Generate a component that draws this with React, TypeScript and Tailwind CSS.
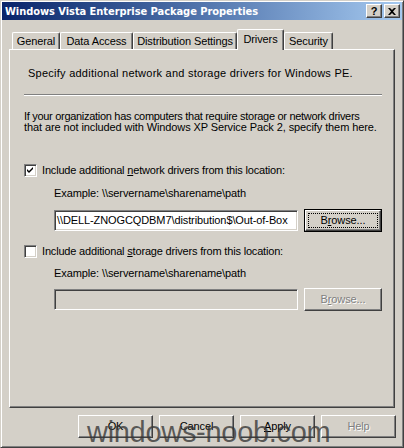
import React from "react";

const font = { fontFamily: '"Liberation Sans", Arial, sans-serif' };

function RaisedButton({
  children,
  className = "",
}: {
  children: React.ReactNode;
  className?: string;
}) {
  return (
    <div
      className={
        "flex items-center justify-center bg-[#d4d0c8] border border-t-white border-l-white border-r-[#404040] border-b-[#404040] shadow-[inset_-1px_-1px_0_#808080] " +
        className
      }
    >
      {children}
    </div>
  );
}

function Checkbox({ checked }: { checked: boolean }) {
  return (
    <div className="w-[13px] h-[13px] bg-white border border-t-[#808080] border-l-[#808080] border-r-white border-b-white shadow-[inset_1px_1px_0_#404040,inset_-1px_-1px_0_#d4d0c8] flex items-center justify-center shrink-0">
      {checked && (
        <svg width="7" height="7" viewBox="0 0 7 7">
          <path d="M0 2 L2 4 L6 0 L6 2 L2 6 L0 4 Z" fill="#000" />
        </svg>
      )}
    </div>
  );
}

function Tab({
  label,
  width,
  selected = false,
}: {
  label: string;
  width: number;
  selected?: boolean;
}) {
  if (selected) {
    return (
      <div
        className="relative z-10 -mb-px h-[21px] flex items-start justify-center pt-[3px] bg-[#d4d0c8] border-l border-t border-white border-r border-r-[#404040] rounded-tl-[2px] rounded-tr-[2px] shadow-[inset_-1px_0_0_#808080]"
        style={{ width }}
      >
        {label}
      </div>
    );
  }
  return (
    <div
      className="h-[17px] flex items-start justify-center pt-[2px] bg-[#d4d0c8] border-l border-t border-white border-r border-r-[#404040] rounded-tl-[2px] rounded-tr-[2px] shadow-[inset_-1px_0_0_#808080]"
      style={{ width }}
    >
      {label}
    </div>
  );
}

export default function App() {
  return (
    <div
      className="relative w-[404px] h-[448px] bg-[#d4d0c8] text-[11px] tracking-[-0.1px] text-black leading-[13px] border border-t-[#d4d0c8] border-l-[#d4d0c8] border-r-[#404040] border-b-[#404040] shadow-[inset_1px_1px_0_#fff,inset_-1px_-1px_0_#808080] p-px overflow-hidden"
      style={font}
    >
      {/* Title bar */}
      <div className="h-[18px] flex items-center justify-between pl-[3px] pr-[2px] bg-gradient-to-r from-[#0a246a] to-[#a6caf0]">
        <span
          className="text-white font-bold text-[11px] tracking-[-0.05px]"
          style={{ fontFamily: '"DejaVu Sans Condensed", "DejaVu Sans", sans-serif' }}
        >
          Windows Vista Enterprise Package Properties
        </span>
        <div className="flex gap-[2px]">
          <RaisedButton className="w-[16px] h-[14px] font-bold text-[11px] leading-none">
            ?
          </RaisedButton>
          <RaisedButton className="w-[16px] h-[14px]">
            <svg width="8" height="7" viewBox="0 0 8 7">
              <path d="M0 0 L2 0 L4 2 L6 0 L8 0 L5 3.5 L8 7 L6 7 L4 5 L2 7 L0 7 L3 3.5 Z" fill="#000" />
            </svg>
          </RaisedButton>
        </div>
      </div>

      {/* Tabs */}
      <div className="mt-[9px] ml-[10px] flex items-end h-[20px]">
        <Tab label="General" width={48} />
        <Tab label="Data Access" width={73} />
        <Tab label="Distribution Settings" width={104} />
        <Tab label="Drivers" width={47} selected />
        <Tab label="Security" width={49} />
      </div>

      {/* Panel */}
      <div className="ml-[7px] w-[386px] h-[359px] flex flex-col border border-t-white border-l-white border-r-[#404040] border-b-[#404040] shadow-[inset_-1px_-1px_0_#808080]">
        <div className="mt-[17px] ml-[18px] tracking-[0.25px]">
          Specify additional network and storage drivers for Windows PE.
        </div>
        <div className="mt-[14px] ml-[14px] w-[358px] h-[2px] border-t border-t-[#808080] border-b border-b-white" />
        <div className="mt-[15px] ml-[14px] leading-[11px]">
          <div className="tracking-[-0.3px]">
            If your organization has computers that require storage or network drivers
          </div>
          <div>that are not included with Windows XP Service Pack 2, specify them here.</div>
        </div>

        {/* Network */}
        <div className="mt-[31px] ml-[14px] flex items-center gap-[5px] h-[13px]">
          <Checkbox checked />
          <span className="tracking-[-0.18px]">
            Include additional <u>n</u>etwork drivers from this location:
          </span>
        </div>
        <div className="mt-[10px] ml-[44px]">Example: \\servername\sharename\path</div>
        <div className="mt-[9px] ml-[44px] flex items-center gap-[6px] h-[23px]">
          <div className="w-[244px] h-[21px] bg-white flex items-center pl-[2px] border border-t-[#808080] border-l-[#808080] border-r-white border-b-white shadow-[inset_1px_1px_0_#404040,inset_-1px_-1px_0_#d4d0c8] overflow-hidden whitespace-nowrap">
            \\DELL-ZNOGCQDBM7\distribution$\Out-of-Box
          </div>
          <div className="w-[78px] h-[23px] border border-black">
            <div className="w-full h-full flex items-center justify-center bg-[#d4d0c8] border border-t-white border-l-white border-r-[#404040] border-b-[#404040] shadow-[inset_-1px_-1px_0_#808080] p-[2px]">
              <div className="w-full h-full flex items-center justify-center border border-dotted border-black">
                B<u>r</u>owse...
              </div>
            </div>
          </div>
        </div>

        {/* Storage */}
        <div className="mt-[13px] ml-[14px] flex items-center gap-[5px] h-[13px]">
          <Checkbox checked={false} />
          <span className="tracking-[-0.18px]">
            Include additional <u>s</u>torage drivers from this location:
          </span>
        </div>
        <div className="mt-[9px] ml-[44px]">Example: \\servername\sharename\path</div>
        <div className="mt-[8px] ml-[44px] flex items-center gap-[6px] h-[23px]">
          <div className="w-[244px] h-[21px] bg-[#d4d0c8] border border-t-[#808080] border-l-[#808080] border-r-white border-b-white shadow-[inset_1px_1px_0_#404040,inset_-1px_-1px_0_#d4d0c8]" />
          <RaisedButton className="w-[78px] h-[23px] text-[#808080] [text-shadow:1px_1px_0_#fff]">
            <span>
              B<u>r</u>owse...
            </span>
          </RaisedButton>
        </div>
      </div>

      {/* Bottom buttons */}
      <div className="mt-[7px] mr-[6px] flex justify-end gap-[6px]">
        <RaisedButton className="w-[75px] h-[23px]">OK</RaisedButton>
        <RaisedButton className="w-[75px] h-[23px]">Cancel</RaisedButton>
        <RaisedButton className="w-[75px] h-[23px]">
          <span>
            <u>A</u>pply
          </span>
        </RaisedButton>
        <RaisedButton className="w-[75px] h-[23px] text-[#808080] [text-shadow:1px_1px_0_#fff]">
          Help
        </RaisedButton>
      </div>

      {/* Watermark */}
      <div
        className="absolute left-[86px] top-[414px] text-[29px] leading-[34px] tracking-[-0.3px] text-[rgba(55,55,55,0.78)] pointer-events-none"
        style={{ fontFamily: '"Liberation Sans", sans-serif' }}
      >
        windows-noob.com
      </div>
    </div>
  );
}
